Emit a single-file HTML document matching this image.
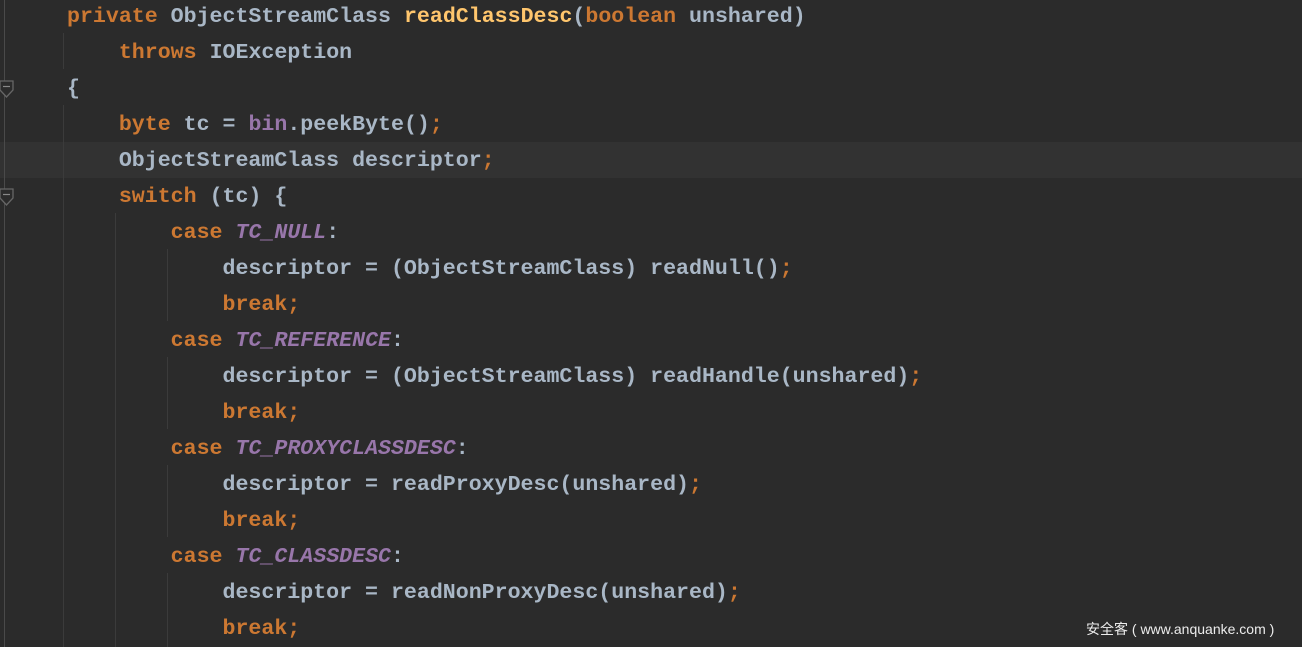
<!DOCTYPE html>
<html><head><meta charset="utf-8"><style>
body{margin:0;width:1302px;height:647px;background:#2b2b2b;overflow:hidden;position:relative;font-family:"Liberation Mono",monospace;}
.code{position:absolute;left:67px;top:-1px;font-size:21.6px;line-height:36px;color:#a9b7c6;white-space:pre;font-weight:bold;}
.k{color:#cc7832}.m{color:#ffc66d}.c{color:#9876aa;font-style:italic}.f{color:#9876aa}
.cur{position:absolute;left:0;top:142px;width:1302px;height:36px;background:#323232}
.g{position:absolute;width:1px;background:#3b3b3b}
.wm{position:absolute;left:1086px;top:619px;font-family:"Liberation Sans","Noto Sans CJK SC",sans-serif;font-size:14px;color:#ececec;white-space:pre}
</style></head><body>
<div class="cur"></div>
<div class="g" style="left:4px;top:0;height:647px;background:#4a4a4a"></div>
<svg style="position:absolute;left:-1px;top:79px" width="16" height="22"><path d="M1 2H14V11L7.5 18L1 11Z" fill="#2b2b2b" stroke="#666" stroke-width="1.3"/><path d="M4 7.5H11" stroke="#888" stroke-width="1.2"/></svg>
<svg style="position:absolute;left:-1px;top:187px" width="16" height="22"><path d="M1 2H14V11L7.5 18L1 11Z" fill="#2b2b2b" stroke="#666" stroke-width="1.3"/><path d="M4 7.5H11" stroke="#888" stroke-width="1.2"/></svg>
<div class="g" style="left:63px;top:33px;height:36px"></div>
<div class="g" style="left:63px;top:105px;height:542px"></div>
<div class="g" style="left:115px;top:213px;height:434px"></div>
<div class="g" style="left:167px;top:249px;height:72px"></div>
<div class="g" style="left:167px;top:357px;height:72px"></div>
<div class="g" style="left:167px;top:465px;height:72px"></div>
<div class="g" style="left:167px;top:573px;height:74px"></div>
<div class="code"><span class="k">private</span> ObjectStreamClass <span class="m">readClassDesc</span>(<span class="k">boolean</span> unshared)
    <span class="k">throws</span> IOException
{
    <span class="k">byte</span> tc = <span class="f">bin</span>.peekByte()<span class="k">;</span>
    ObjectStreamClass descriptor<span class="k">;</span>
    <span class="k">switch</span> (tc) {
        <span class="k">case</span> <span class="c">TC_NULL</span>:
            descriptor = (ObjectStreamClass) readNull()<span class="k">;</span>
            <span class="k">break;</span>
        <span class="k">case</span> <span class="c">TC_REFERENCE</span>:
            descriptor = (ObjectStreamClass) readHandle(unshared)<span class="k">;</span>
            <span class="k">break;</span>
        <span class="k">case</span> <span class="c">TC_PROXYCLASSDESC</span>:
            descriptor = readProxyDesc(unshared)<span class="k">;</span>
            <span class="k">break;</span>
        <span class="k">case</span> <span class="c">TC_CLASSDESC</span>:
            descriptor = readNonProxyDesc(unshared)<span class="k">;</span>
            <span class="k">break;</span></div>
<div class="wm">安全客 ( www.anquanke.com )</div>
</body></html>
